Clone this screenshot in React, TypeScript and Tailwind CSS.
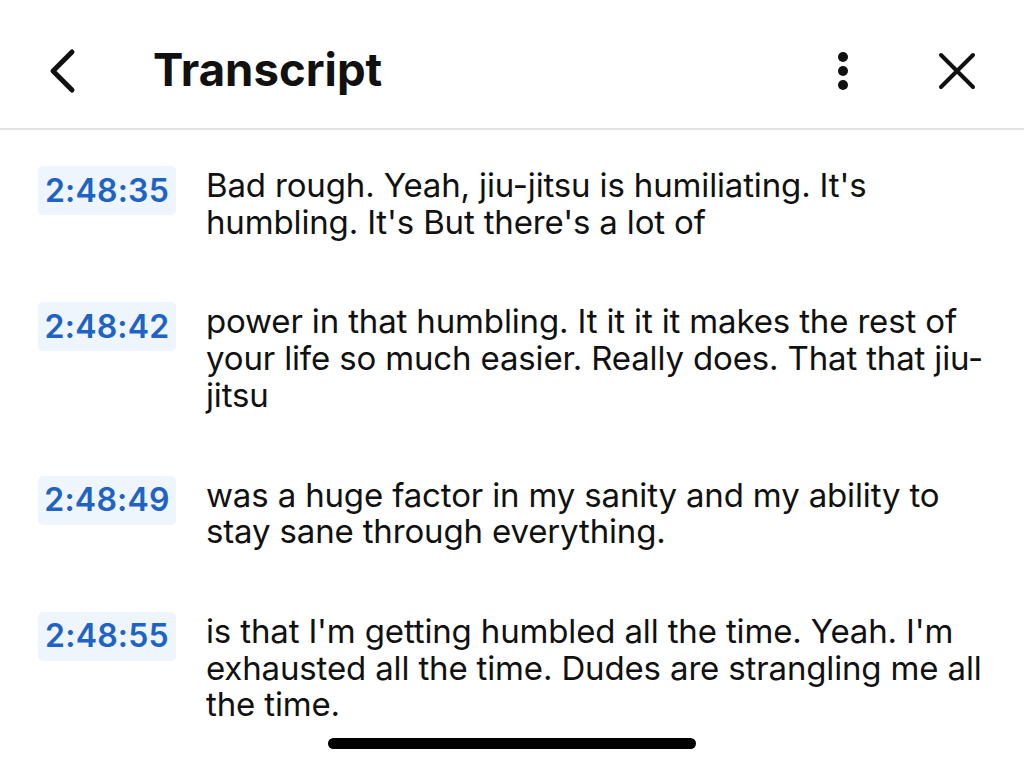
import React from "react";

const rows = [
  {
    time: "2:48:35",
    text: "Bad rough. Yeah, jiu-jitsu is humiliating. It's humbling. It's But there's a lot of",
  },
  {
    time: "2:48:42",
    text: "power in that humbling. It it it it makes the rest of your life so much easier. Really does. That that jiu-jitsu",
  },
  {
    time: "2:48:49",
    text: "was a huge factor in my sanity and my ability to stay sane through everything.",
  },
  {
    time: "2:48:55",
    text: "is that I'm getting humbled all the time. Yeah. I'm exhausted all the time. Dudes are strangling me all the time.",
  },
];

function BackIcon() {
  return (
    <svg width="34" height="48" viewBox="0 0 34 48" fill="none">
      <path d="M26 5 L7 24 L26 43" stroke="#111" strokeWidth="5" strokeLinecap="round" strokeLinejoin="round" />
    </svg>
  );
}

function MoreIcon() {
  return (
    <svg width="14" height="42" viewBox="0 0 14 42" fill="#111">
      <circle cx="7" cy="7" r="5" />
      <circle cx="7" cy="21" r="5" />
      <circle cx="7" cy="35" r="5" />
    </svg>
  );
}

function CloseIcon() {
  return (
    <svg width="38" height="38" viewBox="0 0 38 38" fill="none">
      <path d="M3 3 L35 35 M35 3 L3 35" stroke="#111" strokeWidth="4" strokeLinecap="round" />
    </svg>
  );
}

export default function App() {
  return (
    <div
      className="w-[1024px] h-[769px] bg-white flex flex-col overflow-hidden text-[#111]"
      style={{ fontFamily: "Inter, 'Noto Sans', sans-serif" }}
    >
      {/* Header */}
      <header className="h-[128px] flex items-center pt-[14px] pl-[46px] pr-[48px] shrink-0">
        <button className="w-[34px] flex items-center">
          <BackIcon />
        </button>
        <h1 className="ml-[73px] text-[45.5px] font-bold leading-none pb-[2px]">Transcript</h1>
        <div className="ml-auto flex items-center">
          <button className="mr-[88px] flex items-center">
            <MoreIcon />
          </button>
          <button className="flex items-center">
            <CloseIcon />
          </button>
        </div>
      </header>
      <div className="h-[2px] bg-[#e3e3e3] shrink-0" />

      {/* Transcript list */}
      <main className="flex-1 flex flex-col gap-[62px] pt-[36px] pl-[38px] pr-[40px]">
        {rows.map((row) => (
          <div key={row.time} className="flex items-start">
            <span className="w-[138px] h-[49px] shrink-0 rounded-[5px] bg-[#eff5fd] flex items-center justify-center text-[32px] font-semibold tracking-[0.2px] text-[#1f64c4]">
              {row.time}
            </span>
            <p className="ml-[30px] pt-[1px] text-[33px] leading-[36.7px] tracking-[-0.15px]">{row.text}</p>
          </div>
        ))}
      </main>

      {/* Home indicator */}
      <div className="h-[31px] shrink-0 flex justify-center">
        <div className="w-[368px] h-[11px] rounded-full bg-black" />
      </div>
    </div>
  );
}
